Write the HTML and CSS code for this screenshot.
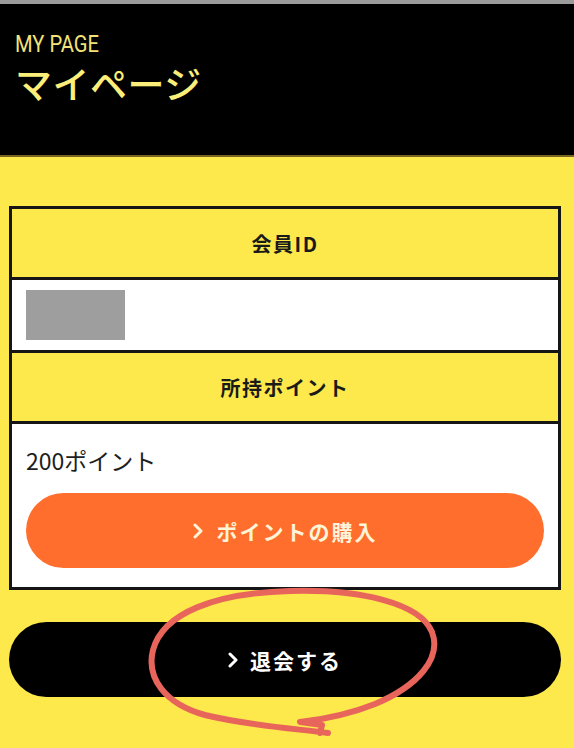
FILE: index.html
```html
<!DOCTYPE html>
<html lang="ja">
<head>
  <meta charset="UTF-8" />
  <title>マイページ</title>
  <link rel="stylesheet" href="styles.css">
</head>
<body>

  <!-- Page Header -->
  <header class="page-header">
    <div class="header-en">MY PAGE</div>
    <h1 class="header-ja">マイページ</h1>
  </header>

  <main class="content">
    <div class="info-table">
      <div class="cell-head">会員ID</div>
      <div class="cell-body id-cell">
        <div class="masked"></div>
      </div>
      <div class="cell-head">所持ポイント</div>
      <div class="cell-body point-cell">
        <p class="points">200ポイント</p>
        <a class="btn btn-orange" href="#">
          <svg class="chev" width="10" height="16" viewBox="0 0 10 16"><path d="M2 2 L8 8 L2 14" fill="none" stroke="currentColor" stroke-width="3" stroke-linecap="round" stroke-linejoin="round"/></svg>
          <span>ポイントの購入</span>
        </a>
      </div>
    </div>

    <div class="leave-wrap">
      <a class="btn btn-black" href="#">
        <svg class="chev" width="10" height="16" viewBox="0 0 10 16"><path d="M2 2 L8 8 L2 14" fill="none" stroke="currentColor" stroke-width="3" stroke-linecap="round" stroke-linejoin="round"/></svg>
        <span>退会する</span>
      </a>
    </div>
  </main>

  <!-- hand drawn annotation -->
  <svg class="scribble" width="574" height="748" viewBox="0 0 574 748">
    <path d="M328 733 C300 729 250 726 205 715 C165 704 146 678 153 650 C163 613 215 593 290 591 C360 589 420 603 432 632 C442 658 418 686 375 704 C345 716 318 720 300 722 L322 725 L320 733"
      fill="none" stroke="#e8655c" stroke-width="6" stroke-linecap="round" stroke-linejoin="round"/>
  </svg>

</body>
</html>
```

FILE: styles.css
```css
body {
  margin: 0;
  font-family: "Noto Sans CJK JP", "Noto Sans", sans-serif;
  background: #fde94b;
  color: #222;
  min-height: 100vh;
  position: relative;
}

.page-header {
  background: #000;
  border-top: 4px solid #9b9b9b;
  border-bottom: 2px solid #7a6424;
  height: 157px;
  box-sizing: border-box;
  padding: 25px 15px 0;
}

.header-en {
  display: inline-block;
  font-family: "Roboto", sans-serif;
  font-size: 24px;
  line-height: 30px;
  color: #f3e27a;
  transform: scaleX(0.84);
  transform-origin: left center;
}

.header-ja {
  margin: 0;
  font-size: 37px;
  line-height: 48px;
  font-weight: 500;
  color: #fbef7a;
  letter-spacing: 0.5px;
}

.content {
  padding: 49px 13px 0 9px;
}

.info-table {
  border: 3px solid #151515;
  display: flex;
  flex-direction: column;
}

.cell-head {
  height: 68px;
  display: flex;
  align-items: center;
  justify-content: center;
  font-size: 20px;
  font-weight: bold;
  letter-spacing: 1.5px;
  color: #1a1a1a;
  border-bottom: 3px solid #151515;
}

.cell-body {
  background: #fff;
  border-bottom: 3px solid #151515;
}

.cell-body:last-child {
  border-bottom: none;
}

.id-cell {
  height: 70px;
  display: flex;
  align-items: center;
  padding-left: 14px;
}

.masked {
  width: 99px;
  height: 50px;
  background: #9e9e9e;
}

.point-cell {
  padding: 20px 14px 19px;
}

.points {
  margin: 0 0 17px;
  font-size: 23px;
  line-height: 32px;
  color: #1e1e1e;
}

.btn {
  display: flex;
  align-items: center;
  justify-content: center;
  gap: 14px;
  text-decoration: none;
  border-radius: 40px;
  font-weight: bold;
  font-size: 21px;
  letter-spacing: 2px;
}

.btn-orange {
  height: 75px;
  background: #ff6e2c;
  color: #fff4d8;
}

.leave-wrap {
  padding-top: 32px;
}

.btn-black {
  height: 75px;
  background: #000;
  color: #fff;
  font-size: 21px;
  gap: 12px;
}

.scribble {
  position: absolute;
  top: 0;
  left: 0;
  pointer-events: none;
}
```
